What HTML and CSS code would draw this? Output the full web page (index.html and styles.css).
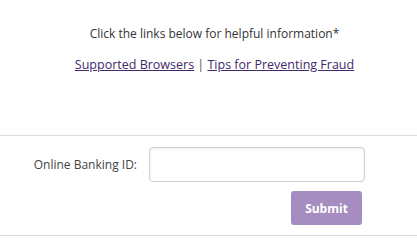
FILE: index.html
```html
<!DOCTYPE html>
<html>
<head>
<meta charset="utf-8">
<link rel="stylesheet" href="styles.css">
</head>
<body>
<div class="info">
  <p class="intro">Click the links below for helpful information*</p>
  <p class="links"><a href="#">Supported Browsers</a> <span class="sep">|</span> <a href="#">Tips for Preventing Fraud</a></p>
</div>
<hr class="rule">
<form class="login">
  <div class="row">
    <label class="label" for="obid">Online Banking ID:</label>
    <input class="field" id="obid" type="text">
  </div>
  <div class="actions">
    <button class="submit" type="button">Submit</button>
  </div>
</form>
<hr class="rule">
</body>
</html>
```
FILE: styles.css
```css
html, body {
  margin: 0;
  padding: 0;
  background: #fff;
}
body {
  font-family: "Open Sans", "Liberation Sans", sans-serif;
  font-size: 12px;
  color: #333;
  width: 417px;
  height: 250px;
  overflow: hidden;
}
.info {
  text-align: center;
  padding: 25px 0 0 12px;
  height: 135px;
  box-sizing: border-box;
}
.intro {
  margin: 0;
  line-height: 17px;
}
.links {
  margin: 14px 0 0;
  line-height: 17px;
  font-size: 12.5px;
}
.links a {
  color: #3f2a6b;
  text-decoration: underline;
}
.sep {
  color: #555;
}
.rule {
  margin: 0;
  border: 0;
  border-top: 1px solid #dcdcdc;
  height: 0;
}
.login {
  height: 99px;
  box-sizing: border-box;
  padding-top: 11px;
}
.row {
  display: grid;
  grid-template-columns: 137px 216px;
  column-gap: 12px;
  align-items: center;
}
.label {
  text-align: right;
  color: #444;
}
.field {
  box-sizing: border-box;
  height: 35px;
  width: 216px;
  margin: 0;
  border: 1px solid #cfcfcf;
  border-radius: 4px;
  box-shadow: inset 0 1px 2px rgba(0,0,0,0.08);
  background: #fff;
}
.actions {
  display: flex;
  justify-content: flex-end;
  width: 362px;
  margin-top: 9px;
}
.submit {
  width: 71px;
  height: 34px;
  border: 0;
  border-radius: 3px;
  background: #a58dc0;
  color: #fff;
  font-family: "Open Sans", "Liberation Sans", sans-serif;
  font-weight: 700;
  font-size: 12px;
  padding: 0;
}
```
